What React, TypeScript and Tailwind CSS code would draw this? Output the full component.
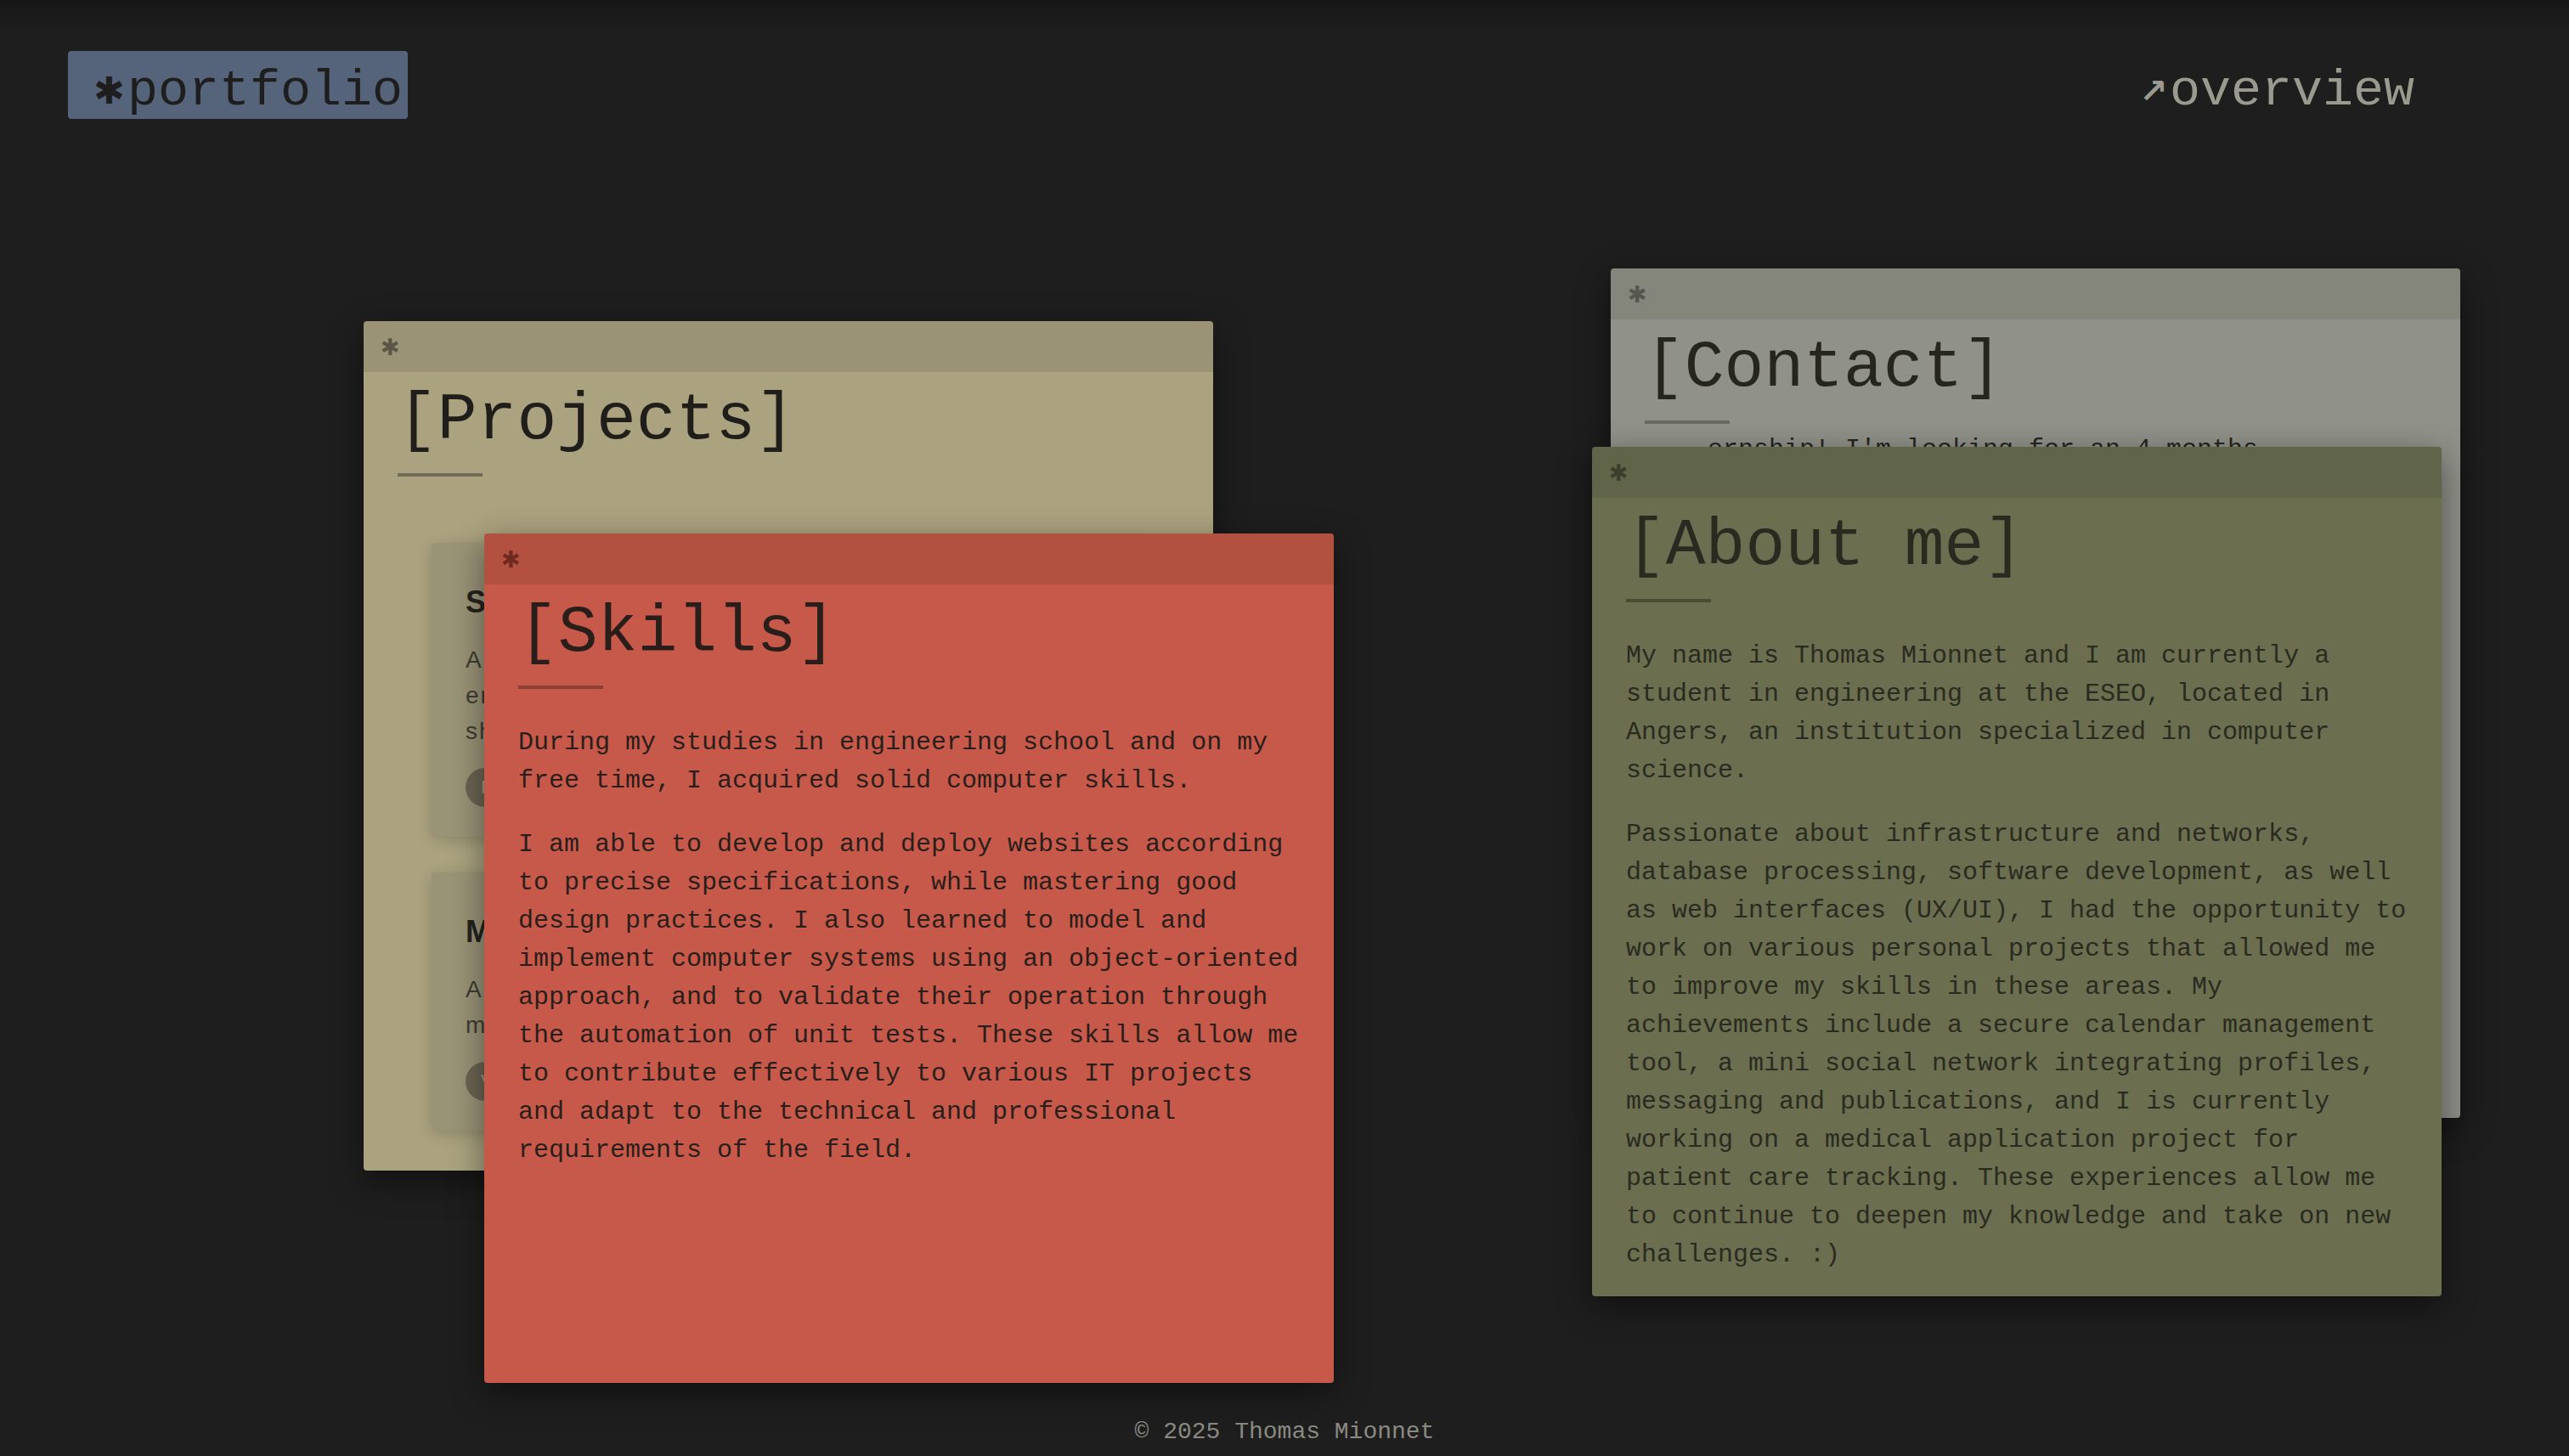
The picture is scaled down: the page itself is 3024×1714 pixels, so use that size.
import type { ReactNode } from 'react';

interface WindowProps {
    title: string;
    className: string;
    headerClass: string;
    bodyClass: string;
    starClass: string;
    lineClass: string;
    children?: ReactNode;
}

function Window({ title, className, headerClass, bodyClass, starClass, lineClass, children }: WindowProps) {
    return (
        <div className={`absolute w-[1000px] h-[1000px] flex flex-col rounded-[4px] overflow-hidden shadow-[0_12px_40px_rgba(0,0,0,0.45)] ${className}`}>
            <div className={`h-[60px] shrink-0 flex items-center pl-[20px] ${headerClass}`}>
                <span className={`text-[27px] leading-none font-bold font-['DejaVu_Sans',sans-serif] ${starClass}`}>✱</span>
            </div>
            <div className={`flex-1 px-[40px] pt-[20px] overflow-hidden ${bodyClass}`}>
                <h2 className="text-[78px] leading-[75px] font-normal">[{title}]</h2>
                <div className={`mt-[24px] w-[100px] h-[4px] ${lineClass}`} />
                {children}
            </div>
        </div>
    );
}

function ProjectCard({ title, lines, tag }: { title: string; lines: string[]; tag: string }) {
    return (
        <div className="mx-[40px] rounded-[4px] bg-[#9a9477] shadow-[0_4px_18px_rgba(0,0,0,0.18)] px-[40px] pt-[48px] pb-[35px] font-['Liberation_Sans',sans-serif]">
            <h3 className="text-[36px] leading-[43px] font-bold text-[#24231e]">{title}</h3>
            <p className="mt-[26px] text-[28px] leading-[42px] tracking-[2px] text-[#3f3d34]">
                {lines.map((l, i) => (
                    <span key={i} className="block">{l}</span>
                ))}
            </p>
            <span className="inline-block mt-[22px] h-[46px] px-[18px] rounded-full bg-[#6b6553] text-[22px] leading-[46px] text-[#a39c84]">{tag}</span>
        </div>
    );
}

export default function App() {
    return (
        <div className="relative w-full h-[1714px] overflow-hidden bg-[#1e1e1e] font-['Liberation_Mono',monospace]">
            <div className="absolute inset-x-0 top-0 h-[40px] bg-gradient-to-b from-[#171717] to-[#1e1e1e]" />

            {/* nav */}
            <header className="relative flex justify-between items-start pt-[60px] pl-[80px] pr-[182px]">
                <a className="flex h-[80px] w-[400px] pl-[30px] pt-[14px] rounded-[4px] bg-[#55647a] text-[60px] leading-[66px] text-[#1e1e1e]">
                    <span className="inline-block w-[40px] text-[44px] font-bold font-['DejaVu_Sans',sans-serif]">✱</span>portfolio
                </a>
                <a className="flex h-[80px] pt-[14px] text-[60px] leading-[66px] text-[#9a9a8f]">
                    <span className="inline-block w-[36px] text-[40px] font-bold font-['DejaVu_Sans',sans-serif]">↗</span>overview
                </a>
            </header>

            {/* desktop */}
            <Window
                title="Projects"
                className="left-[428px] top-[378px] z-10"
                headerClass="bg-[#9b9375]"
                bodyClass="bg-[#aba37f] text-[#1f1e1a]"
                starClass="text-[#5c5646]"
                lineClass="bg-[#706c57]"
            >
                <div className="mt-[78px] flex flex-col gap-[42px]">
                    <ProjectCard
                        title="Secure Calendar"
                        lines={[
                            'A calendar management tool with',
                            'encrypted storage and authentication,',
                            'sharing and notifications.',
                        ]}
                        tag="PHP"
                    />
                    <ProjectCard
                        title="Mini Social Network"
                        lines={['A social network with profiles and', 'messaging and publications.']}
                        tag="Vue.js"
                    />
                </div>
            </Window>

            <Window
                title="Skills"
                className="left-[570px] top-[628px] z-20"
                headerClass="bg-[#b25140]"
                bodyClass="bg-[#c7594a] text-[#2a1e1b]"
                starClass="text-[#6e2a20]"
                lineClass="bg-[#8b3f33]"
            >
                <div className="mt-[41px] text-[30px] leading-[45px]">
                    <p className="mb-[30px]">During my studies in engineering school and on my free time, I acquired solid computer skills.</p>
                    <p>I am able to develop and deploy websites according to precise specifications, while mastering good design practices. I also learned to model and implement computer systems using an object-oriented approach, and to validate their operation through the automation of unit tests. These skills allow me to contribute effectively to various IT projects and adapt to the technical and professional requirements of the field.</p>
                </div>
            </Window>

            <Window
                title="Contact"
                className="left-[1896px] top-[316px] z-10"
                headerClass="bg-[#84857b]"
                bodyClass="bg-[#909189] text-[#26261f]"
                starClass="text-[#55564f]"
                lineClass="bg-[#6a6a63]"
            >
                <p className="mt-[8px] pl-[74px] whitespace-nowrap text-[30px] leading-[45px]">ernship! I'm looking for an 4 months</p>
            </Window>

            <Window
                title="About me"
                className="left-[1874px] top-[526px] z-20"
                headerClass="bg-[#606448]"
                bodyClass="bg-[#6b6f4f] text-[#2a2b20]"
                starClass="text-[#3c3e2c]"
                lineClass="bg-[#4a4d36]"
            >
                <div className="mt-[41px] text-[30px] leading-[45px]">
                    <p className="mb-[30px]">My name is Thomas Mionnet and I am currently a student in engineering at the ESEO, located in Angers, an institution specialized in computer science.</p>
                    <p>Passionate about infrastructure and networks, database processing, software development, as well as web interfaces (UX/UI), I had the opportunity to work on various personal projects that allowed me to improve my skills in these areas. My achievements include a secure calendar management tool, a mini social network integrating profiles, messaging and publications, and I is currently working on a medical application project for patient care tracking. These experiences allow me to continue to deepen my knowledge and take on new challenges. :)</p>
                </div>
            </Window>

            <footer className="absolute inset-x-0 bottom-[12px] text-center text-[28px] leading-[32px] text-[#8a8a82]">
                © 2025 Thomas Mionnet
            </footer>
        </div>
    );
}
